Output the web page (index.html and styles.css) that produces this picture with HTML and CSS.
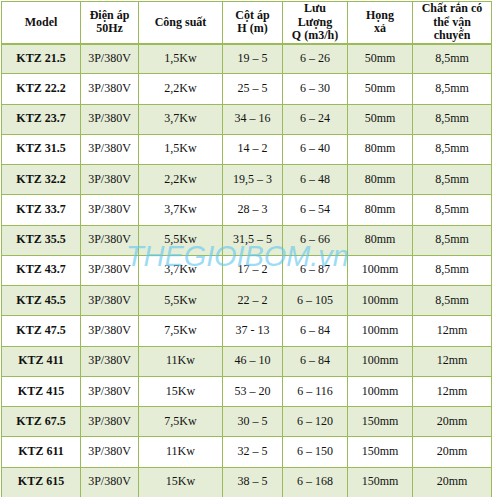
FILE: index.html
```html
<!DOCTYPE html>
<html lang="vi">
<head>
<meta charset="utf-8">
<title>KTZ</title>
<link rel="stylesheet" href="styles.css">
</head>
<body>
<div class="wrap">
<table class="spec">
<colgroup>
<col class="c1"><col class="c2"><col class="c3"><col class="c4"><col class="c5"><col class="c6"><col class="c7">
</colgroup>
<thead>
<tr class="head">
<th>Model</th>
<th>Điện áp<br>50Hz</th>
<th>Công suất</th>
<th>Cột áp<br>H (m)</th>
<th>Lưu<br>Lượng<br>Q (m3/h)</th>
<th>Họng<br>xả</th>
<th>Chất rắn có<br>thể vận<br>chuyển</th>
</tr>
</thead>
<tbody>
<tr class="alt"><td class="m">KTZ 21.5</td><td>3P/380V</td><td>1,5Kw</td><td>19 – 5</td><td>6 – 26</td><td>50mm</td><td>8,5mm</td></tr>
<tr><td class="m">KTZ 22.2</td><td>3P/380V</td><td>2,2Kw</td><td>25 – 5</td><td>6 – 30</td><td>50mm</td><td>8,5mm</td></tr>
<tr class="alt"><td class="m">KTZ 23.7</td><td>3P/380V</td><td>3,7Kw</td><td>34 – 16</td><td>6 – 24</td><td>50mm</td><td>8,5mm</td></tr>
<tr><td class="m">KTZ 31.5</td><td>3P/380V</td><td>1,5Kw</td><td>14 – 2</td><td>6 – 40</td><td>80mm</td><td>8,5mm</td></tr>
<tr class="alt"><td class="m">KTZ 32.2</td><td>3P/380V</td><td>2,2Kw</td><td>19,5 – 3</td><td>6 – 48</td><td>80mm</td><td>8,5mm</td></tr>
<tr><td class="m">KTZ 33.7</td><td>3P/380V</td><td>3,7Kw</td><td>28 – 3</td><td>6 – 54</td><td>80mm</td><td>8,5mm</td></tr>
<tr class="alt"><td class="m">KTZ 35.5</td><td>3P/380V</td><td>5,5Kw</td><td>31,5 – 5</td><td>6 – 66</td><td>80mm</td><td>8,5mm</td></tr>
<tr><td class="m">KTZ 43.7</td><td>3P/380V</td><td>3,7Kw</td><td>17 – 2</td><td>6 – 87</td><td>100mm</td><td>8,5mm</td></tr>
<tr class="alt"><td class="m">KTZ 45.5</td><td>3P/380V</td><td>5,5Kw</td><td>22 – 2</td><td>6 – 105</td><td>100mm</td><td>8,5mm</td></tr>
<tr><td class="m">KTZ 47.5</td><td>3P/380V</td><td>7,5Kw</td><td>37 - 13</td><td>6 – 84</td><td>100mm</td><td>12mm</td></tr>
<tr class="alt"><td class="m">KTZ 411</td><td>3P/380V</td><td>11Kw</td><td>46 – 10</td><td>6 – 84</td><td>100mm</td><td>12mm</td></tr>
<tr><td class="m">KTZ 415</td><td>3P/380V</td><td>15Kw</td><td>53 – 20</td><td>6 – 116</td><td>100mm</td><td>12mm</td></tr>
<tr class="alt"><td class="m">KTZ 67.5</td><td>3P/380V</td><td>7,5Kw</td><td>30 – 5</td><td>6 – 120</td><td>150mm</td><td>20mm</td></tr>
<tr><td class="m">KTZ 611</td><td>3P/380V</td><td>11Kw</td><td>32 – 5</td><td>6 – 150</td><td>150mm</td><td>20mm</td></tr>
<tr class="alt"><td class="m">KTZ 615</td><td>3P/380V</td><td>15Kw</td><td>38 – 5</td><td>6 – 168</td><td>150mm</td><td>20mm</td></tr>
</tbody>
</table>
<div class="watermark">THEGIOIBOM.vn</div>
</div>
</body>
</html>
```

FILE: styles.css
```css
html, body {
  margin: 0;
  padding: 0;
  background: #ffffff;
}
.wrap {
  position: relative;
  padding: 1px;
  width: 490px;
}
.spec {
  border-collapse: collapse;
  table-layout: fixed;
  width: 490px;
  font-family: "Liberation Serif", "Times New Roman", serif;
  font-size: 12px;
  color: #111111;
}
.c1 { width: 79px; }
.c2 { width: 58px; }
.c3 { width: 84px; }
.c4 { width: 60px; }
.c5 { width: 65px; }
.c6 { width: 65px; }
.c7 { width: 79px; }
.spec th,
.spec td {
  box-sizing: border-box;
  border: 1px solid #9bbb59;
  text-align: center;
  vertical-align: middle;
  padding: 0 2px;
}
.spec th {
  font-weight: bold;
  line-height: 13.5px;
  height: 40px;
  border-bottom: 2px solid #9bbb59;
}
.spec td {
  height: 30.27px;
  line-height: 14px;
  padding-bottom: 2px;
}
.spec td.m {
  font-weight: bold;
}
.spec tr.alt td {
  background: #e5edd6;
}
.watermark {
  position: absolute;
  left: 126px;
  top: 242px;
  font-family: "Liberation Sans", Arial, sans-serif;
  font-style: italic;
  font-size: 29px;
  line-height: 29px;
  letter-spacing: -0.1px;
  color: rgba(100, 200, 240, 0.65);
  pointer-events: none;
  white-space: nowrap;
}
```
